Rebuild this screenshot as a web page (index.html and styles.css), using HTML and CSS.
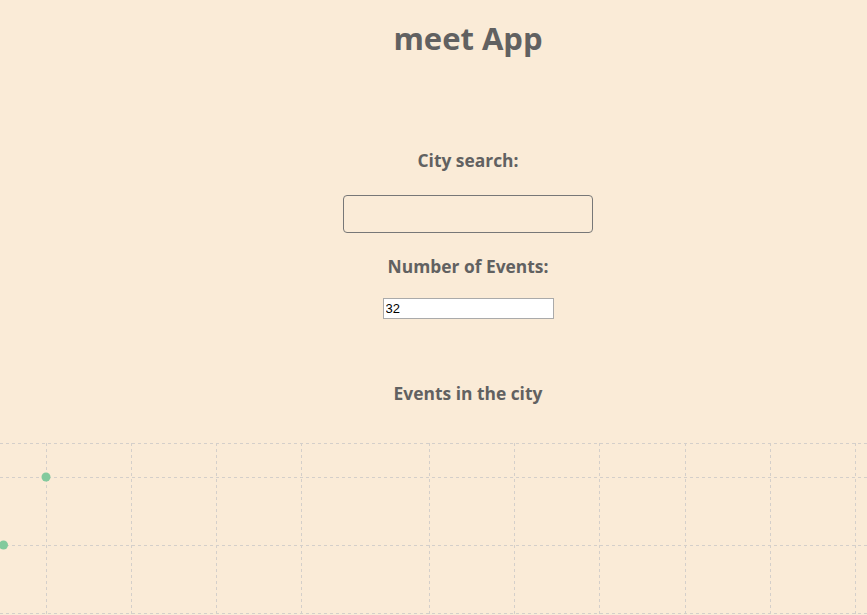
FILE: index.html
```html
<!DOCTYPE html>
<html lang="en">
<head>
<meta charset="utf-8">
<title>meet App</title>
<link rel="stylesheet" href="styles.css">
</head>
<body>
<div class="app">
  <h1 class="title">meet App</h1>
  <div class="city-search">
    <h3 class="label city-label">City search:</h3>
    <input class="city-input" type="text">
  </div>
  <div class="number-of-events">
    <h3 class="label num-label">Number of Events:</h3>
    <input class="num-input" type="number" value="32">
  </div>
  <h3 class="label events-title">Events in the city</h3>
  <div class="chart">
    <svg width="867" height="195" viewBox="0 0 867 195">
      <g class="grid" stroke="#d4cfca" stroke-dasharray="3 3" fill="none">
        <line x1="0" y1="23.5" x2="867" y2="23.5"/>
        <line x1="0" y1="57.5" x2="867" y2="57.5"/>
        <line x1="0" y1="125.5" x2="867" y2="125.5"/>
        <line x1="0" y1="193.5" x2="867" y2="193.5"/>
        <line x1="46.5" y1="23" x2="46.5" y2="195"/>
        <line x1="131.5" y1="23" x2="131.5" y2="195"/>
        <line x1="216.5" y1="23" x2="216.5" y2="195"/>
        <line x1="301.5" y1="23" x2="301.5" y2="195"/>
        <line x1="429.5" y1="23" x2="429.5" y2="195"/>
        <line x1="514.5" y1="23" x2="514.5" y2="195"/>
        <line x1="599.5" y1="23" x2="599.5" y2="195"/>
        <line x1="685.5" y1="23" x2="685.5" y2="195"/>
        <line x1="770.5" y1="23" x2="770.5" y2="195"/>
        <line x1="855.5" y1="23" x2="855.5" y2="195"/>
      </g>
      <circle cx="46" cy="57" r="4.5" fill="#82ca9d"/>
      <circle cx="3.5" cy="125" r="4.5" fill="#82ca9d"/>
    </svg>
  </div>
</div>
</body>
</html>
```
FILE: styles.css
```css
html, body {
  margin: 0;
  padding: 0;
  background: #faebd7;
}
body {
  font-family: "Open Sans", "Noto Sans", sans-serif;
  color: #616161;
  overflow: hidden;
}
.app {
  width: 867px;
  height: 615px;
  box-sizing: border-box;
  padding-left: 69px;
  overflow: hidden;
  display: flex;
  flex-direction: column;
  align-items: center;
  text-align: center;
}
.title {
  margin: 18px 0 0;
  font-size: 31px;
  line-height: 40px;
  font-weight: 700;
}
.city-search, .number-of-events {
  display: flex;
  flex-direction: column;
  align-items: center;
}
.label {
  margin: 0;
  font-size: 17.4px;
  line-height: 24px;
  font-weight: 700;
}
.city-label {
  margin-top: 90px;
}
.city-input {
  margin-top: 23px;
  width: 250px;
  height: 38px;
  box-sizing: border-box;
  border: 1px solid #777;
  border-radius: 4px;
  background: transparent;
  padding: 0 8px;
}
.num-label {
  margin-top: 21px;
}
.num-input {
  margin-top: 20px;
  width: 171px;
  height: 21px;
  box-sizing: border-box;
  border: 1px solid #aaa;
  background: #fff;
  padding: 1px 2px;
  font-family: "Liberation Sans", Arial, sans-serif;
  font-size: 13px;
  color: #000;
  -moz-appearance: textfield;
}
.num-input::-webkit-inner-spin-button,
.num-input::-webkit-outer-spin-button {
  -webkit-appearance: none;
  margin: 0;
}
.events-title {
  margin-top: 62px;
}
.chart {
  align-self: flex-start;
  margin-top: 15px;
  margin-left: -69px;
  width: 867px;
  height: 195px;
  flex-shrink: 0;
}
.chart svg {
  display: block;
}
```
